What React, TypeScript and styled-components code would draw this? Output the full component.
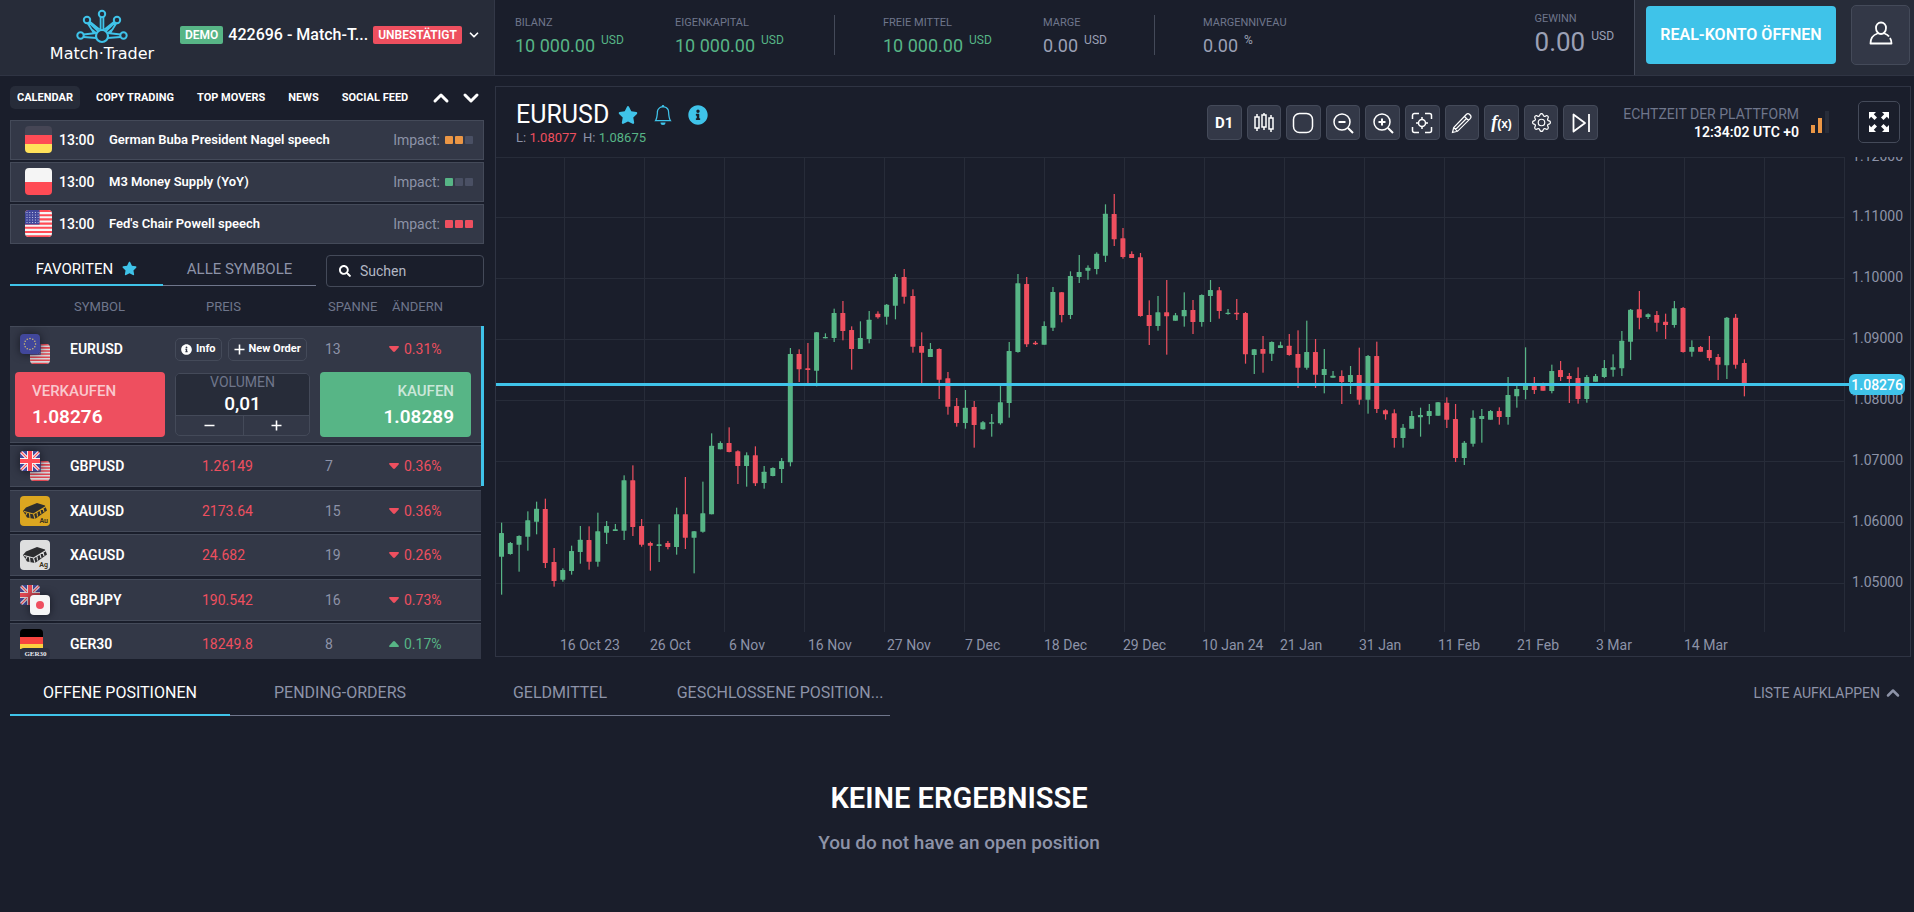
import React from 'react';
import styled, { createGlobalStyle } from 'styled-components';
import { ChevronDown, ChevronUp } from 'lucide-react';
import { FaStar, FaInfoCircle, FaSearch } from 'react-icons/fa';
import { BsBell, BsGear } from 'react-icons/bs';

const c = {
  bg: '#1a1e2b',
  panel: '#272c39',
  row: '#333847',
  line: '#2f3443',
  border: '#444a59',
  grid: '#272c39',
  muted: '#8d93a8',
  dim: '#6f768b',
  green: '#57b586',
  red: '#ee4f5f',
  blue: '#3fc3e9',
  orange: '#eb9645',
};

const GlobalStyle = createGlobalStyle`
  *, *::before, *::after { box-sizing: border-box; }
  body { margin: 0; background: ${c.bg}; color: #fff; font: 400 14px/18px Roboto, "Liberation Sans", sans-serif; }
  button, input { font: inherit; color: inherit; margin: 0; }
  button { cursor: pointer; padding: 0; background: none; border: 0; }
  svg { display: block; flex: none; }
  h1, h2, p, dl, dd, ul { margin: 0; padding: 0; }
  ul { list-style: none; }
`;

const Page = styled.div`
  min-height: 100vh;
  display: flex;
  flex-direction: column;
`;

/* ---------- header ---------- */

const Header = styled.header`
  display: flex;
  height: 76px;
  border-bottom: 1px solid ${c.line};
`;

const BrandPanel = styled.div`
  width: 495px;
  display: flex;
  align-items: center;
  padding: 0 20px 0 50px;
  background: ${c.panel};
  border-right: 1px solid ${c.row};
`;

const Logo = styled.a`
  width: 104px;
  display: flex;
  flex-direction: column;
  align-items: center;
  margin: 0 26px 3px 0;
  color: #fff;
  text-decoration: none;
  white-space: nowrap;
  font: 400 16px/20px "DejaVu Sans", sans-serif;
`;

const AccountButton = styled.button`
  flex: 1;
  display: flex;
  align-items: center;
  gap: 5px;
  margin-bottom: 5px;
`;

const AccountName = styled.span`
  flex: 1;
  text-align: left;
  font-size: 16px;
  font-weight: 500;
  white-space: nowrap;
`;

const Badge = styled.span<{ $color: string }>`
  height: 18px;
  padding: 0 5px;
  border-radius: 2px;
  background: ${(p) => p.$color};
  font-size: 12px;
  font-weight: 600;
  line-height: 19px;
`;

const Stats = styled.dl`
  flex: 1;
  display: flex;
  padding-left: 20px;
`;

const Stat = styled.div<{ $w: number; $divided?: boolean }>`
  width: ${(p) => p.$w}px;
  height: 40px;
  margin-top: 15px;
  margin-right: ${(p) => (p.$divided ? 48 : 0)}px;
  border-right: ${(p) => (p.$divided ? `1px solid ${c.border}` : '0')};
`;

const StatLabel = styled.dt`
  color: ${c.dim};
  font-size: 11px;
  line-height: 16px;
`;

const StatValue = styled.dd<{ $positive?: boolean; $large?: boolean }>`
  display: flex;
  gap: 6px;
  margin-top: 4px;
  color: ${(p) => (p.$positive ? c.green : '#9ba0b5')};
  font-size: ${(p) => (p.$large ? 26 : 18)}px;
  line-height: 22px;
  white-space: nowrap;
`;

const Unit = styled.span`
  font-size: 12px;
  line-height: 10px;
`;

const Profit = styled.div`
  margin: 11px 20px 0 auto;
`;

const AccountActions = styled.div`
  display: flex;
  gap: 15px;
  padding: 5px 4px 0 11px;
  background: ${c.panel};
  border-left: 1px solid ${c.border};
`;

const OpenAccount = styled.button`
  width: 190px;
  height: 58px;
  margin-top: 1px;
  border-radius: 4px;
  background: ${c.blue};
  font-size: 16px;
  font-weight: 600;
  white-space: nowrap;
`;

const ProfileButton = styled.button`
  width: 59px;
  height: 60px;
  display: grid;
  place-items: center;
  padding-bottom: 4px;
  border: 1px solid ${c.border};
  border-radius: 5px;
  background: ${c.row};
`;

/* ---------- workspace ---------- */

const Workspace = styled.main`
  display: flex;
  align-items: flex-start;
  padding: 10px 3px 0 10px;
`;

const Sidebar = styled.aside`
  width: 474px;
  height: 573px;
  flex: none;
  display: flex;
  flex-direction: column;
  overflow: hidden;
  margin-right: 11px;
`;

const WidgetTabs = styled.nav`
  height: 23px;
  flex: none;
  display: flex;
  align-items: center;
  margin-bottom: 11px;
`;

const WidgetTab = styled.button<{ $active?: boolean }>`
  height: 23px;
  padding: 0 7px;
  margin-right: 9px;
  border-radius: 5px;
  background: ${(p) => (p.$active ? c.panel : 'none')};
  font-size: 11px;
  font-weight: 700;
  line-height: 24px;
  white-space: nowrap;
`;

const WidgetArrows = styled.div`
  display: flex;
  gap: 6px;
  margin: 0 1px 0 auto;
`;

const EventList = styled.ul`
  flex: none;
  display: flex;
  flex-direction: column;
  gap: 2px;
`;

const EventRow = styled.li`
  height: 40px;
  display: flex;
  align-items: center;
  padding: 0 10px 0 14px;
  border: 1px solid ${c.border};
  background: ${c.row};
  font-weight: 500;
  line-height: 20px;
`;

const EventTime = styled.time`
  width: 50px;
  margin-left: 7px;
`;

const EventTitle = styled.span`
  flex: 1;
  font-size: 13px;
  font-weight: 600;
`;

const Impact = styled.span`
  display: flex;
  align-items: center;
  gap: 2px;
  color: ${c.muted};
  font-weight: 400;
`;

const ImpactLabel = styled.span`
  margin-right: 3px;
`;

const ImpactMark = styled.i<{ $color: string }>`
  width: 8px;
  height: 8px;
  border-radius: 1px;
  background: ${(p) => p.$color};
`;

const FlagBox = styled.span`
  width: 27px;
  height: 27px;
  flex: none;
  overflow: hidden;
  margin-bottom: 2px;
  border-radius: 4px;
`;

const SymbolBar = styled.div`
  display: flex;
  flex: none;
  margin-top: 11px;
  gap: 10px;
`;

const SymbolTab = styled.button<{ $active?: boolean }>`
  width: 153px;
  height: 31px;
  display: flex;
  align-items: center;
  justify-content: center;
  gap: 9px;
  padding-bottom: 4px;
  color: ${(p) => (p.$active ? '#fff' : c.muted)};
  box-shadow: inset 0 ${(p) => (p.$active ? '-2px' : '-1px')} ${(p) => (p.$active ? c.blue : c.dim)};
  font-size: 15px;
  white-space: nowrap;
`;

const SymbolTabs = styled.div`
  display: flex;
`;

const SearchBox = styled.label`
  flex: 1;
  height: 32px;
  display: flex;
  align-items: center;
  gap: 9px;
  padding: 0 10px 0 12px;
  border: 1px solid ${c.border};
  border-radius: 4px;
`;

const SearchInput = styled.input`
  width: 100%;
  border: 0;
  outline: 0;
  padding: 0;
  background: none;
  font-size: 14px;
  &::placeholder { color: #b3b7c4; opacity: 1; }
`;

const Quotes = styled.table`
  display: flex;
  flex-direction: column;
  min-height: 0;
  flex: 1;
`;

const QuotesHead = styled.thead`
  display: block;
  height: 39px;
  flex: none;
`;

const HeadRow = styled.tr`
  display: grid;
  grid-template-columns: 64px 132px 122px 64px 1fr;
  align-items: center;
  height: 39px;
`;

const HeadCell = styled.th`
  padding: 0;
  color: ${c.dim};
  font-size: 13px;
  font-weight: 400;
  text-align: left;
`;

const QuotesBody = styled.tbody`
  display: flex;
  flex-direction: column;
  gap: 2px;
  min-height: 0;
  flex: 1;
  overflow: hidden;
  background: linear-gradient(${c.blue}, ${c.blue}) right top / 3px 160px no-repeat;
`;

const QuoteRow = styled.tr<{ $open?: boolean }>`
  display: grid;
  flex: none;
  grid-template-columns: ${(p) => (p.$open ? '60px 105px 150px 64px 1fr' : '60px 132px 123px 64px 1fr')};
  grid-template-rows: ${(p) => (p.$open ? '44px 71px' : '40px')};
  align-items: center;
  margin-right: 3px;
  border: solid ${c.border};
  border-width: 1px 0;
  background: ${c.row};
  line-height: ${(p) => (p.$open ? 18 : 20)}px;
  &:nth-child(even) { margin-bottom: 1px; }
`;

const Cell = styled.td<{ $color?: string }>`
  padding: 0;
  color: ${(p) => p.$color || c.muted};
  font-size: 14px;
  font-weight: 400;
`;

const IconCell = styled(Cell)`
  padding-left: 10px;
`;

const NameCell = styled.th`
  padding: 0;
  font-size: 14px;
  font-weight: 600;
  text-align: left;
`;

const Change = styled.span`
  display: flex;
  align-items: center;
  gap: 5px;
`;

const PairIcon = styled.span`
  position: relative;
  display: block;
  width: 30px;
  height: 30px;
`;

const PairFlag = styled.span<{ $second?: boolean; $front?: boolean }>`
  position: absolute;
  z-index: ${(p) => (p.$front ? 1 : 0)};
  top: ${(p) => (p.$second ? 10 : 0)}px;
  left: ${(p) => (p.$second ? 10 : 0)}px;
  width: 20px;
  height: 20px;
  overflow: hidden;
  border-radius: 4px;
  opacity: ${(p) => (p.$front ? 1 : 0.85)};
  box-shadow: ${(p) => (p.$front ? '0 0 8px rgba(15, 18, 28, 0.8)' : 'none')};
`;

const ChipGroup = styled.div`
  display: flex;
  gap: 6px;
`;

const Chip = styled.button`
  height: 23px;
  display: flex;
  align-items: center;
  gap: 4px;
  padding: 0 5px;
  border: 1px solid ${c.border};
  border-radius: 5px;
  font-size: 11px;
  font-weight: 700;
  white-space: nowrap;
`;

const TradeCell = styled.td`
  grid-column: 1 / -1;
  display: grid;
  grid-template-columns: 150px 135px 1fr;
  gap: 10px;
  padding: 0 10px 4px 5px;
`;

const TradeButton = styled.button<{ $side: 'sell' | 'buy' }>`
  height: 65px;
  padding: 0 17px 2px;
  border-radius: 4px;
  background: ${(p) => (p.$side === 'sell' ? c.red : c.green)};
  text-align: ${(p) => (p.$side === 'sell' ? 'left' : 'right')};
`;

const TradeLabel = styled.span`
  display: block;
  color: rgba(255, 255, 255, 0.7);
  font-size: 15px;
  font-weight: 500;
  line-height: 26px;
`;

const TradePrice = styled.span`
  display: block;
  font-size: 19px;
  font-weight: 600;
  line-height: 26px;
`;

const Volume = styled.div`
  height: 63px;
  margin-top: 1px;
  display: flex;
  flex-direction: column;
  overflow: hidden;
  border: 1px solid ${c.border};
  border-radius: 5px;
`;

const VolumeField = styled.label`
  flex: 1;
  display: flex;
  flex-direction: column;
  align-items: center;
  background: ${c.panel};
  color: ${c.dim};
  line-height: 17px;
`;

const VolumeInput = styled.input`
  width: 80px;
  height: 24px;
  padding: 0;
  border: 0;
  background: none;
  color: #fff;
  text-align: center;
  font-size: 19px;
  font-weight: 500;
`;

const Steps = styled.div`
  height: 21px;
  display: grid;
  grid-template-columns: 1fr 1fr;
  border-top: 1px solid ${c.border};
`;

const Step = styled.button`
  display: grid;
  place-items: center;
  & + & { border-left: 1px solid ${c.border}; }
`;

/* ---------- chart ---------- */

const ChartPanel = styled.section`
  flex: 1;
  min-width: 0;
  border: 1px solid ${c.line};
`;

const ChartHeader = styled.div`
  height: 70px;
  display: flex;
  align-items: flex-start;
  padding: 14px 10px 0 20px;
`;

const ChartTitle = styled.div`
  flex: 1;
`;

const TitleLine = styled.div`
  height: 28px;
  display: flex;
  align-items: center;
  color: ${c.blue};
`;

const SymbolName = styled.h1`
  margin-right: 9px;
  color: #fff;
  font-size: 25px;
  line-height: 30px;
  font-weight: 400;
`;

const TitleIcon = styled.button`
  margin-right: 15px;
`;

const Range = styled.p`
  color: ${c.muted};
  font-size: 13px;
  white-space: pre;
`;

const Tone = styled.span<{ $color: string }>`
  color: ${(p) => p.$color};
`;

const Tools = styled.div`
  width: 391px;
  display: grid;
  grid-template-columns: repeat(10, 1fr);
  gap: 5px;
  margin: 4px 20px 0 0;
`;

const Tool = styled.button`
  height: 35px;
  display: grid;
  place-items: center;
  border: 1px solid ${c.border};
  border-radius: 4px;
  background: ${c.row};
  font-size: 15px;
  font-weight: 700;
`;

const FunctionMark = styled.span`
  font: 700 12px/20px "Liberation Sans", sans-serif;
  & em { font: italic 700 18px/20px "Liberation Serif", serif; }
`;

const Clock = styled.div`
  width: 181px;
  margin-top: 4px;
  text-align: right;
  white-space: nowrap;
  font-size: 14px;
  color: ${c.dim};
`;

const ClockTime = styled.time`
  display: block;
  color: #fff;
  font-weight: 600;
`;

const Signal = styled.div`
  display: flex;
  align-items: flex-end;
  gap: 3px;
  height: 22px;
  margin: 10px 29px 0 12px;
`;

const SignalBar = styled.i<{ $h: number; $on?: boolean }>`
  width: 4px;
  height: ${(p) => p.$h}px;
  background: ${(p) => (p.$on ? c.orange : c.panel)};
`;

const FullScreen = styled.button`
  width: 42px;
  height: 42px;
  display: grid;
  place-items: center;
  border: 1px solid ${c.border};
  border-radius: 5px;
`;

const ChartSvg = styled.svg`
  width: 100%;
  height: auto;
  font-family: Roboto, "Liberation Sans", sans-serif;
  font-size: 14px;
  fill: ${c.muted};
`;

/* ---------- positions ---------- */

const Positions = styled.section`
  flex: 1;
  padding: 10px 11px 0 10px;
`;

const PositionBar = styled.div`
  display: flex;
  align-items: flex-start;
  justify-content: space-between;
`;

const PositionTabs = styled.nav`
  display: flex;
`;

const PositionTab = styled.button<{ $active?: boolean }>`
  width: 220px;
  height: 47px;
  color: ${(p) => (p.$active ? '#fff' : c.muted)};
  box-shadow: inset 0 ${(p) => (p.$active ? '-2px' : '-1px')} ${(p) => (p.$active ? c.blue : c.dim)};
  font-size: 16px;
  white-space: nowrap;
`;

const ExpandButton = styled.button`
  display: flex;
  align-items: center;
  gap: 3px;
  margin-top: 14px;
  color: ${c.muted};
  font-size: 14px;
`;

const Empty = styled.div`
  margin-top: 62px;
  padding-left: 5px;
  text-align: center;
`;

const EmptyTitle = styled.h2`
  font-size: 29px;
  line-height: 40px;
  font-weight: 600;
`;

const EmptyText = styled.p`
  margin-top: 13px;
  color: ${c.muted};
  font-size: 19px;
  line-height: 24px;
  font-weight: 500;
`;

/* ---------- flags and drawings ---------- */

type FlagCode = 'de' | 'pl' | 'us' | 'eu' | 'gb' | 'jp';

function Flag({ code }: { code: FlagCode }) {
  const stars = [0, 1, 2, 3, 4, 5, 6, 7, 8, 9, 10, 11];
  return (
    <svg viewBox="0 0 27 27" width="100%" height="100%" aria-hidden="true">
      {code === 'de' && (
        <>
          <path fill="#464655" d="M0 0h27v9H0z" />
          <path fill="#ff4b55" d="M0 9h27v9H0z" />
          <path fill="#ffe15a" d="M0 18h27v9H0z" />
        </>
      )}
      {code === 'pl' && (
        <>
          <path fill="#f5f5f5" d="M0 0h27v14H0z" />
          <path fill="#ff4b55" d="M0 14h27v13H0z" />
        </>
      )}
      {code === 'us' && (
        <>
          <path fill="#f5f5f5" d="M0 0h27v27H0z" />
          <path stroke="#ff4b55" strokeWidth="2.1" d="M0 1h27M0 5.2h27M0 9.4h27M0 13.6h27M0 17.8h27M0 22h27M0 26.2h27" />
          <path fill="#41479b" d="M0 0h14.5v14.6H0z" />
          <path stroke="#c8cae6" strokeWidth="1" strokeDasharray="1 1.8" d="M1.5 2.5h12M1.5 5h12M1.5 7.5h12M1.5 10h12M1.5 12.5h12" />
        </>
      )}
      {code === 'eu' && (
        <>
          <path fill="#41479b" d="M0 0h27v27H0z" />
          {stars.map((i) => (
            <circle
              key={i}
              r="1"
              fill="#d8c370"
              cx={13.5 + 7.5 * Math.sin((i * Math.PI) / 6)}
              cy={13.5 - 7.5 * Math.cos((i * Math.PI) / 6)}
            />
          ))}
        </>
      )}
      {code === 'gb' && (
        <>
          <path fill="#41479b" d="M0 0h27v27H0z" />
          <path stroke="#f5f5f5" strokeWidth="4.4" d="M0 0l27 27M27 0L0 27" />
          <path stroke="#ff4b55" strokeWidth="1.6" d="M0 0l27 27M27 0L0 27" />
          <path stroke="#f5f5f5" strokeWidth="8" d="M13.5 0v27M0 13.5h27" />
          <path stroke="#ff4b55" strokeWidth="5.4" d="M13.5 0v27M0 13.5h27" />
        </>
      )}
      {code === 'jp' && (
        <>
          <path fill="#f5f5f5" d="M0 0h27v27H0z" />
          <circle cx="13.5" cy="13.5" r="5.4" fill="#ee4f5f" />
        </>
      )}
    </svg>
  );
}

function Pair({ first, second, secondOnTop }: { first: FlagCode; second: FlagCode; secondOnTop?: boolean }) {
  return (
    <PairIcon>
      <PairFlag $front={!secondOnTop}><Flag code={first} /></PairFlag>
      <PairFlag $second $front={secondOnTop}><Flag code={second} /></PairFlag>
    </PairIcon>
  );
}

function Metal({ tint, mark }: { tint: string; mark: string }) {
  return (
    <svg width="30" height="30" viewBox="0 0 30 30" aria-hidden="true">
      <rect width="30" height="30" rx="4" fill={tint} />
      <path fill="#2c2d2f" d="M6 11.5L17 7l8 2.500 2 5-12 8.500-8-1.500-4-6.500z" />
      <path stroke={tint} strokeWidth="1.1" fill="none" d="M4 15.500l9.500 2.500L26 10.500M13.500 18l1.500 5M7 17l-1.500 2.500M9.500 17.500l.500 4.500M17 16.500l.500 4M20 14.500l1 3.500M23 12.500l1 3.500" />
      <text x="28" y="26.500" textAnchor="end" fontSize="7" fontWeight="700" fill="#3b3320">{mark}</text>
    </svg>
  );
}

function Ger30() {
  return (
    <svg width="30" height="30" viewBox="0 0 30 30" aria-hidden="true">
      <path d="M0 8V4a4 4 0 0 1 4-4h15a4 4 0 0 1 4 4v4z" fill="#000" />
      <path d="M0 8h23v7H0z" fill="#f8443f" />
      <path d="M0 15h23v5H0z" fill="#fbd03f" />
      <rect y="19" width="30" height="11" rx="4" fill="#2b3040" />
      <text x="15.500" y="27" textAnchor="middle" fontSize="7" fontWeight="700" fontFamily="Liberation Serif, serif" fill="#e6e8ee">GER30</text>
    </svg>
  );
}

function CrownLogo() {
  return (
    <svg width="52" height="35" viewBox="0 0 52 35" fill="none" stroke={c.blue} strokeWidth="2" aria-hidden="true">
      <path
        d="M24.600 8v13M27.400 8v13M13.500 12.500l10 8M13 13.500l9 8.500M11.500 14l7 11M15 20l5 4M38.500 12.500l-10 8M39 13.500L30 22M40.500 14l-7 11M37 20l-5 4M7.500 25.500l13-1.500M7.500 28l13 1M44.500 25.500L31.500 24M44.500 28l-13 1"
        strokeWidth="1.800"
      />
      <circle cx="26" cy="27" r="6" fill={c.panel} strokeWidth="2.200" />
      <circle cx="26" cy="5" r="3.200" fill={c.panel} />
      <circle cx="11" cy="11" r="3.200" fill={c.panel} />
      <circle cx="41" cy="11" r="3.200" fill={c.panel} />
      <circle cx="4.500" cy="26.500" r="3.200" fill={c.panel} />
      <circle cx="47.500" cy="26.500" r="3.200" fill={c.panel} />
    </svg>
  );
}

const iconProps = { fill: 'none', stroke: '#fff', strokeWidth: 1.5, 'aria-hidden': true } as const;

const toolIcons: { name: string; icon: React.ReactNode }[] = [
  { name: 'Zeitrahmen', icon: 'D1' },
  {
    name: 'Kerzen',
    icon: (
      <svg width="22" height="22" viewBox="0 0 22 22" {...iconProps}>
        <path d="M2 5h4v11H2zM4 2v3M4 16v3M9 3h4v12H9zM11 1v2M11 15v3M16 6h4v11h-4zM18 3v3M18 17v3" />
      </svg>
    ),
  },
  {
    name: 'Form',
    icon: (
      <svg width="22" height="22" viewBox="0 0 22 22" {...iconProps}>
        <rect x="1.500" y="1.500" width="19" height="19" rx="6" />
      </svg>
    ),
  },
  {
    name: 'Verkleinern',
    icon: (
      <svg width="22" height="22" viewBox="0 0 22 22" {...iconProps}>
        <circle cx="10" cy="10" r="8" /><path d="M16 16l5 5M6.500 10h7" strokeWidth="2" />
      </svg>
    ),
  },
  {
    name: 'Vergrößern',
    icon: (
      <svg width="22" height="22" viewBox="0 0 22 22" {...iconProps}>
        <circle cx="10" cy="10" r="8" /><path d="M16 16l5 5M6.500 10h7M10 6.500v7" strokeWidth="2" />
      </svg>
    ),
  },
  {
    name: 'Zentrieren',
    icon: (
      <svg width="22" height="22" viewBox="0 0 22 22" {...iconProps}>
        <path d="M1.500 7V3.500a2 2 0 0 1 2-2H8M14 1.500h4.500a2 2 0 0 1 2 2V7M20.500 15v3.500a2 2 0 0 1-2 2H14M8 20.500H3.500a2 2 0 0 1-2-2V15" />
        <circle cx="11" cy="11" r="3.500" /><path d="M11 5v3M11 14v3M5 11h3M14 11h3" />
      </svg>
    ),
  },
  {
    name: 'Zeichnen',
    icon: (
      <svg width="22" height="22" viewBox="0 0 22 22" {...iconProps} strokeWidth="1.200">
        <path d="M1.500 20.500l1.200-5L15.500 2.300c2-1.800 5.800 1.800 4 4L6.500 19.300zM2.700 15.500l3.800 3.800M13.500 4.500l4 4M4.500 17.500L15.500 6.500" />
      </svg>
    ),
  },
  { name: 'Indikatoren', icon: <FunctionMark><em>f</em>(x)</FunctionMark> },
  { name: 'Einstellungen', icon: <BsGear size={19} /> },
  {
    name: 'Zum Ende',
    icon: (
      <svg width="20" height="22" viewBox="0 0 20 22" {...iconProps}>
        <path d="M2.500 2.500v17L14 11zM18 2v18" strokeLinejoin="round" strokeWidth="1.800" />
      </svg>
    ),
  },
];

/* ---------- chart data ---------- */

// Each block lists "direction high top bottom low"; values are thirds of a unit below the block level.
const blocks = [
  {
    level: 193,
    bars:
      'G 518 549 620 734,G 576 579 612 614,G 556 558 584 665,G 484 511 560 602,G 455 476 515 553,R 446 477 639 654,R 594 636 693 710,G 655 660 689 695,G 587 603 663 674,G 528 569 606 641,R 529 570 635 659,G 488 544 635 650,G 513 528 548 582,G 522 538 543 543,G 376 391 542 570,R 346 391 531 558,R 507 528 584 590,R 575 579 587 662,G 523 583 588 636,R 573 579 591 598,G 473 493 591 614,R 381 493 563 597,G 543 544 563 670,G 395 490 545 548,G 250 287 493 493,G 274 279 298 298,R 232 279 306 307,R 301 304 348 402,G 307 316 348 410,R 289 316 400 408,G 348 365 399 416,G 352 354 378 379,G 324 333 357 399',
  },
  {
    level: -7,
    bars:
      'G 594 612 937 949,R 598 612 658 696,R 579 655 660 700,G 546 547 662 709,G 550 561 565 565,G 476 489 564 576,R 453 489 543 571,R 529 540 597 659,G 514 564 597 597,G 483 509 567 580,R 484 491 502 506,G 462 464 500 524,G 372 381 467 508,R 357 381 440 461,R 418 438 590 608,R 547 588 608 702,G 579 597 621 621,R 595 597 689 747,R 666 685 770 794,R 744 768 819 830,G 720 773 819 836,R 753 771 825 893,G 813 817 838 839,G 792 817 821 860,G 706 757 820 824,G 576 603 759 803,G 372 400 606 608,R 381 402 583 591,R 573 578 583 585,G 514 528 584 584,G 411 426 533 543,R 426 427 495 517,G 364 378 495 507,G 315 366 381 399,G 346 353 362 389,G 307 311 357 373,G 163 191 317 336,R 132 192 268 288,R 234 265 321 326,R 304 312 324 324,R 309 322 498 500,R 451 495 528 585,G 438 487 528 542,R 390 487 499 614,G 489 496 512 512,G 427 480 499 530,R 450 480 516 552,G 433 435 516 530,G 390 420 438 516,R 411 421 483 506,G 477 488 492 494,R 447 488 493 510,R 486 489 613 641',
  },
  {
    level: 113,
    bars:
      'G 237 238 255 312,R 198 237 251 308,G 214 216 251 273,G 215 226 234 234,R 192 227 255 257,R 181 252 293 354,G 152 246 293 299,R 207 246 314 354,G 237 297 315 370,G 303 317 323 323,R 301 318 336 402,G 288 315 336 372,R 233 315 389 404,G 255 258 389 431,R 215 258 417 429,R 418 421 433 449,R 418 430 504 533,G 462 473 504 533,G 423 438 476 476,G 413 435 442 500,G 402 423 438 463,G 396 397 437 437,R 382 398 449 474,R 402 447 564 576,G 513 518 564 585,G 421 443 521 530,G 417 438 447 518,G 420 423 449 449,R 412 423 441 464,G 321 375 441 464,G 348 357 379 413,G 232 342 360 388,R 321 345 360 372,R 338 345 362 362,G 284 303 363 370,R 273 300 321 333',
  },
  {
    level: -7,
    bars:
      'R 669 678 687 759,R 652 684 747 761,G 675 681 747 758,G 672 678 695 695,G 630 654 681 684,G 613 652 659 680,G 543 572 655 678,G 477 479 575 630,R 423 478 503 538,G 490 493 501 507,R 483 495 518 545,R 491 515 525 567,G 453 475 525 533,R 471 474 606 608,G 571 591 605 620,R 588 591 605 605,R 558 600 624 632,R 612 621 644 690,G 501 503 646 687,R 492 503 644 656,R 628 639 706 739',
  },
];

const candles = blocks.flatMap(({ level, bars }) =>
  bars.split(',').map((bar) => {
    const [dir, ...values] = bar.split(' ');
    const [high, top, bottom, low] = values.map((v) => level + Number(v) / 3);
    return { up: dir === 'G', high, top, bottom, low };
  }),
);

const firstCandle = 5.5;
const candleStep = 8.752;

const timeLabels: [number, string][] = [
  [64, '16 Oct 23'], [154, '26 Oct'], [233, '6 Nov'], [312, '16 Nov'], [391, '27 Nov'],
  [469, '7 Dec'], [548, '18 Dec'], [627, '29 Dec'], [706, '10 Jan 24'], [784, '21 Jan'],
  [863, '31 Jan'], [942, '11 Feb'], [1021, '21 Feb'], [1100, '3 Mar'], [1188, '14 Mar'],
];

const priceLabels = ['1.12000', '1.11000', '1.10000', '1.09000', '1.08000', '1.07000', '1.06000', '1.05000'];
const gridTop = (i: number) => Math.floor(i * 60.9) + 0.5;

function PriceChart() {
  return (
    <ChartSvg viewBox="0 0 1414 499" role="img" aria-label="EURUSD Kerzendiagramm">
      {priceLabels.map((label, i) => (
        <path key={label} d={`M0 ${gridTop(i)}H1348`} stroke={c.grid} />
      ))}
      {Array.from({ length: 17 }, (_, i) => (
        <path key={i} d={`M${68.5 + i * 80} 0V475`} stroke={c.grid} />
      ))}
      {candles.map((k, i) => {
        const x = firstCandle + i * candleStep;
        const color = k.up ? c.green : c.red;
        return (
          <g key={i} fill={color}>
            <rect x={x - 0.5} y={k.high} width="1.2" height={Math.max(1, k.low - k.high)} />
            <rect x={x - 2.5} y={k.top} width="5" height={Math.max(1, k.bottom - k.top)} rx="0.5" />
          </g>
        );
      })}
      {priceLabels.map((label, i) => (
        <text key={label} x="1407" y={gridTop(i) + 3.5} textAnchor="end">{label}</text>
      ))}
      {timeLabels.map(([x, label]) => (
        <text key={label} x={x} y="493">{label}</text>
      ))}
      <path d="M0 227.500H1355" stroke={c.blue} strokeWidth="3" />
      <rect x="1353" y="217" width="56" height="21" rx="6" fill={c.blue} />
      <text x="1407" y="233" textAnchor="end" fill="#fff" fontWeight="500">1.08276</text>
    </ChartSvg>
  );
}

/* ---------- content ---------- */

const events: { flag: FlagCode; title: string; level: number; color: string }[] = [
  { flag: 'de', title: 'German Buba President Nagel speech', level: 2, color: c.orange },
  { flag: 'pl', title: 'M3 Money Supply (YoY)', level: 1, color: c.green },
  { flag: 'us', title: "Fed's Chair Powell speech", level: 3, color: c.red },
];

const quotes = [
  { icon: <Pair first="gb" second="us" />, name: 'GBPUSD', price: '1.26149', spread: 7, change: '0.36%', up: false },
  { icon: <Metal tint="#dba620" mark="Au" />, name: 'XAUUSD', price: '2173.64', spread: 15, change: '0.36%', up: false },
  { icon: <Metal tint="#dedfdf" mark="Ag" />, name: 'XAGUSD', price: '24.682', spread: 19, change: '0.26%', up: false },
  { icon: <Pair first="gb" second="jp" secondOnTop />, name: 'GBPJPY', price: '190.542', spread: 16, change: '0.73%', up: false },
  { icon: <Ger30 />, name: 'GER30', price: '18249.8', spread: 8, change: '0.17%', up: true },
];

const PlusMark = ({ minus }: { minus?: boolean }) => (
  <svg width="11" height="11" viewBox="0 0 11 11" stroke="#fff" strokeWidth="1.600" aria-hidden="true">
    <path d={minus ? 'M.500 5.500h10' : 'M.500 5.500h10M5.500 .500v10'} />
  </svg>
);

function TopBar() {
  return (
    <Header>
      <BrandPanel>
        <Logo href="#">
          <CrownLogo />
          Match·Trader
        </Logo>
        <AccountButton>
          <Badge $color={c.green}>DEMO</Badge>
          <AccountName>422696 - Match-T...</AccountName>
          <Badge $color={c.red}>UNBESTÄTIGT</Badge>
          <ChevronDown size={14} strokeWidth={3} />
        </AccountButton>
      </BrandPanel>
      <Stats>
        <Stat $w={160}>
          <StatLabel>BILANZ</StatLabel>
          <StatValue $positive>10 000.00 <Unit>USD</Unit></StatValue>
        </Stat>
        <Stat $w={160} $divided>
          <StatLabel>EIGENKAPITAL</StatLabel>
          <StatValue $positive>10 000.00 <Unit>USD</Unit></StatValue>
        </Stat>
        <Stat $w={160}>
          <StatLabel>FREIE MITTEL</StatLabel>
          <StatValue $positive>10 000.00 <Unit>USD</Unit></StatValue>
        </Stat>
        <Stat $w={112} $divided>
          <StatLabel>MARGE</StatLabel>
          <StatValue>0.00 <Unit>USD</Unit></StatValue>
        </Stat>
        <Stat $w={112}>
          <StatLabel>MARGENNIVEAU</StatLabel>
          <StatValue>0.00 <Unit>%</Unit></StatValue>
        </Stat>
        <Profit>
          <StatLabel>GEWINN</StatLabel>
          <StatValue $large>0.00 <Unit>USD</Unit></StatValue>
        </Profit>
      </Stats>
      <AccountActions>
        <OpenAccount>REAL-KONTO ÖFFNEN</OpenAccount>
        <ProfileButton aria-label="Profil">
          <svg width="24" height="24" viewBox="0 0 24 24" fill="none" stroke="#fff" strokeWidth="1.800" aria-hidden="true">
            <path d="M12 1.500c3 0 5 2.500 5 5.500s-2 6-5 6-5-3-5-6 2-5.500 5-5.500zM8.500 12.500C4 14 1.500 17 1.500 22.500h21c0-2-.500-4-1.500-5.500M15.500 12.500c2 .700 3.500 1.500 4.500 3" strokeLinejoin="round" />
          </svg>
        </ProfileButton>
      </AccountActions>
    </Header>
  );
}

function Calendar() {
  return (
    <>
      <WidgetTabs>
        <WidgetTab $active>CALENDAR</WidgetTab>
        <WidgetTab>COPY TRADING</WidgetTab>
        <WidgetTab>TOP MOVERS</WidgetTab>
        <WidgetTab>NEWS</WidgetTab>
        <WidgetTab>SOCIAL FEED</WidgetTab>
        <WidgetArrows>
          <button aria-label="Zurück"><ChevronUp size={24} strokeWidth={3} /></button>
          <button aria-label="Weiter"><ChevronDown size={24} strokeWidth={3} /></button>
        </WidgetArrows>
      </WidgetTabs>
      <EventList>
        {events.map((e) => (
          <EventRow key={e.title}>
            <FlagBox><Flag code={e.flag} /></FlagBox>
            <EventTime>13:00</EventTime>
            <EventTitle>{e.title}</EventTitle>
            <Impact>
              <ImpactLabel>Impact:</ImpactLabel>
              {[1, 2, 3].map((n) => (
                <ImpactMark key={n} $color={n <= e.level ? e.color : '#4a5064'} />
              ))}
            </Impact>
          </EventRow>
        ))}
      </EventList>
    </>
  );
}

function ChangeValue({ up, value }: { up: boolean; value: string }) {
  return (
    <Change>
      <svg width="10" height="6" viewBox="0 0 10 6" fill="currentColor" aria-hidden="true">
        <path d={up ? 'M0 5a1 1 0 0 0 1 1h8a1 1 0 0 0 1-1L6 .500a1.500 1.500 0 0 0-2 0z' : 'M0 1a1 1 0 0 1 1-1h8a1 1 0 0 1 1 1L6 5.500a1.500 1.500 0 0 1-2 0z'} />
      </svg>
      {value}
    </Change>
  );
}

function Symbols() {
  return (
    <>
      <SymbolBar>
        <SymbolTabs>
          <SymbolTab $active>FAVORITEN <FaStar size={15} color={c.blue} /></SymbolTab>
          <SymbolTab>ALLE SYMBOLE</SymbolTab>
        </SymbolTabs>
        <SearchBox>
          <FaSearch size={12} />
          <SearchInput type="text" placeholder="Suchen" aria-label="Suchen" />
        </SearchBox>
      </SymbolBar>
      <Quotes>
        <QuotesHead>
          <HeadRow>
            <HeadCell />
            <HeadCell>SYMBOL</HeadCell>
            <HeadCell>PREIS</HeadCell>
            <HeadCell>SPANNE</HeadCell>
            <HeadCell>ÄNDERN</HeadCell>
          </HeadRow>
        </QuotesHead>
        <QuotesBody>
          <QuoteRow $open>
            <IconCell><Pair first="eu" second="us" /></IconCell>
            <NameCell scope="row">EURUSD</NameCell>
            <Cell $color="#fff">
              <ChipGroup>
                <Chip><FaInfoCircle size={11} />Info</Chip>
                <Chip><PlusMark />New Order</Chip>
              </ChipGroup>
            </Cell>
            <Cell>13</Cell>
            <Cell $color={c.red}><ChangeValue up={false} value="0.31%" /></Cell>
            <TradeCell colSpan={5}>
              <TradeButton $side="sell">
                <TradeLabel>VERKAUFEN</TradeLabel>
                <TradePrice>1.08276</TradePrice>
              </TradeButton>
              <Volume>
                <VolumeField>
                  VOLUMEN
                  <VolumeInput type="text" defaultValue="0,01" />
                </VolumeField>
                <Steps>
                  <Step aria-label="Weniger"><PlusMark minus /></Step>
                  <Step aria-label="Mehr"><PlusMark /></Step>
                </Steps>
              </Volume>
              <TradeButton $side="buy">
                <TradeLabel>KAUFEN</TradeLabel>
                <TradePrice>1.08289</TradePrice>
              </TradeButton>
            </TradeCell>
          </QuoteRow>
          {quotes.map((q) => (
            <QuoteRow key={q.name}>
              <IconCell>{q.icon}</IconCell>
              <NameCell scope="row">{q.name}</NameCell>
              <Cell $color={c.red}>{q.price}</Cell>
              <Cell>{q.spread}</Cell>
              <Cell $color={q.up ? c.green : c.red}><ChangeValue up={q.up} value={q.change} /></Cell>
            </QuoteRow>
          ))}
        </QuotesBody>
      </Quotes>
    </>
  );
}

function Chart() {
  return (
    <ChartPanel>
      <ChartHeader>
        <ChartTitle>
          <TitleLine>
            <SymbolName>EURUSD</SymbolName>
            <TitleIcon aria-label="Favorit"><FaStar size={20} /></TitleIcon>
            <TitleIcon aria-label="Alarm"><BsBell size={20} /></TitleIcon>
            <TitleIcon aria-label="Info"><FaInfoCircle size={20} /></TitleIcon>
          </TitleLine>
          <Range>
            L: <Tone $color={c.red}>1.08077</Tone>  H: <Tone $color={c.green}>1.08675</Tone>
          </Range>
        </ChartTitle>
        <Tools>
          {toolIcons.map((t) => (
            <Tool key={t.name} aria-label={t.name}>{t.icon}</Tool>
          ))}
        </Tools>
        <Clock>
          ECHTZEIT DER PLATTFORM
          <ClockTime>12:34:02 UTC +0</ClockTime>
        </Clock>
        <Signal>
          <SignalBar $h={8} $on />
          <SignalBar $h={15} $on />
          <SignalBar $h={22} />
        </Signal>
        <FullScreen aria-label="Vollbild">
          <svg width="20" height="20" viewBox="0 0 20 20" aria-hidden="true">
            <path fill="#fff" d="M0 0h7L4.800 2.200 8 5.500 5.500 8 2.200 4.800 0 7zM20 0v7l-2.200-2.200L14.500 8 12 5.500l3.200-3.300L13 0zM20 20h-7l2.200-2.200L12 14.500l2.500-2.500 3.300 3.200L20 13zM0 20v-7l2.200 2.200L5.500 12 8 14.500l-3.200 3.300L7 20z" />
          </svg>
        </FullScreen>
      </ChartHeader>
      <PriceChart />
    </ChartPanel>
  );
}

export default function App() {
  return (
    <Page>
      <GlobalStyle />
      <TopBar />
      <Workspace>
        <Sidebar>
          <Calendar />
          <Symbols />
        </Sidebar>
        <Chart />
      </Workspace>
      <Positions>
        <PositionBar>
          <PositionTabs>
            <PositionTab $active>OFFENE POSITIONEN</PositionTab>
            <PositionTab>PENDING-ORDERS</PositionTab>
            <PositionTab>GELDMITTEL</PositionTab>
            <PositionTab>GESCHLOSSENE POSITION...</PositionTab>
          </PositionTabs>
          <ExpandButton>LISTE AUFKLAPPEN <ChevronUp size={20} strokeWidth={3} /></ExpandButton>
        </PositionBar>
        <Empty>
          <EmptyTitle>KEINE ERGEBNISSE</EmptyTitle>
          <EmptyText>You do not have an open position</EmptyText>
        </Empty>
      </Positions>
    </Page>
  );
}
